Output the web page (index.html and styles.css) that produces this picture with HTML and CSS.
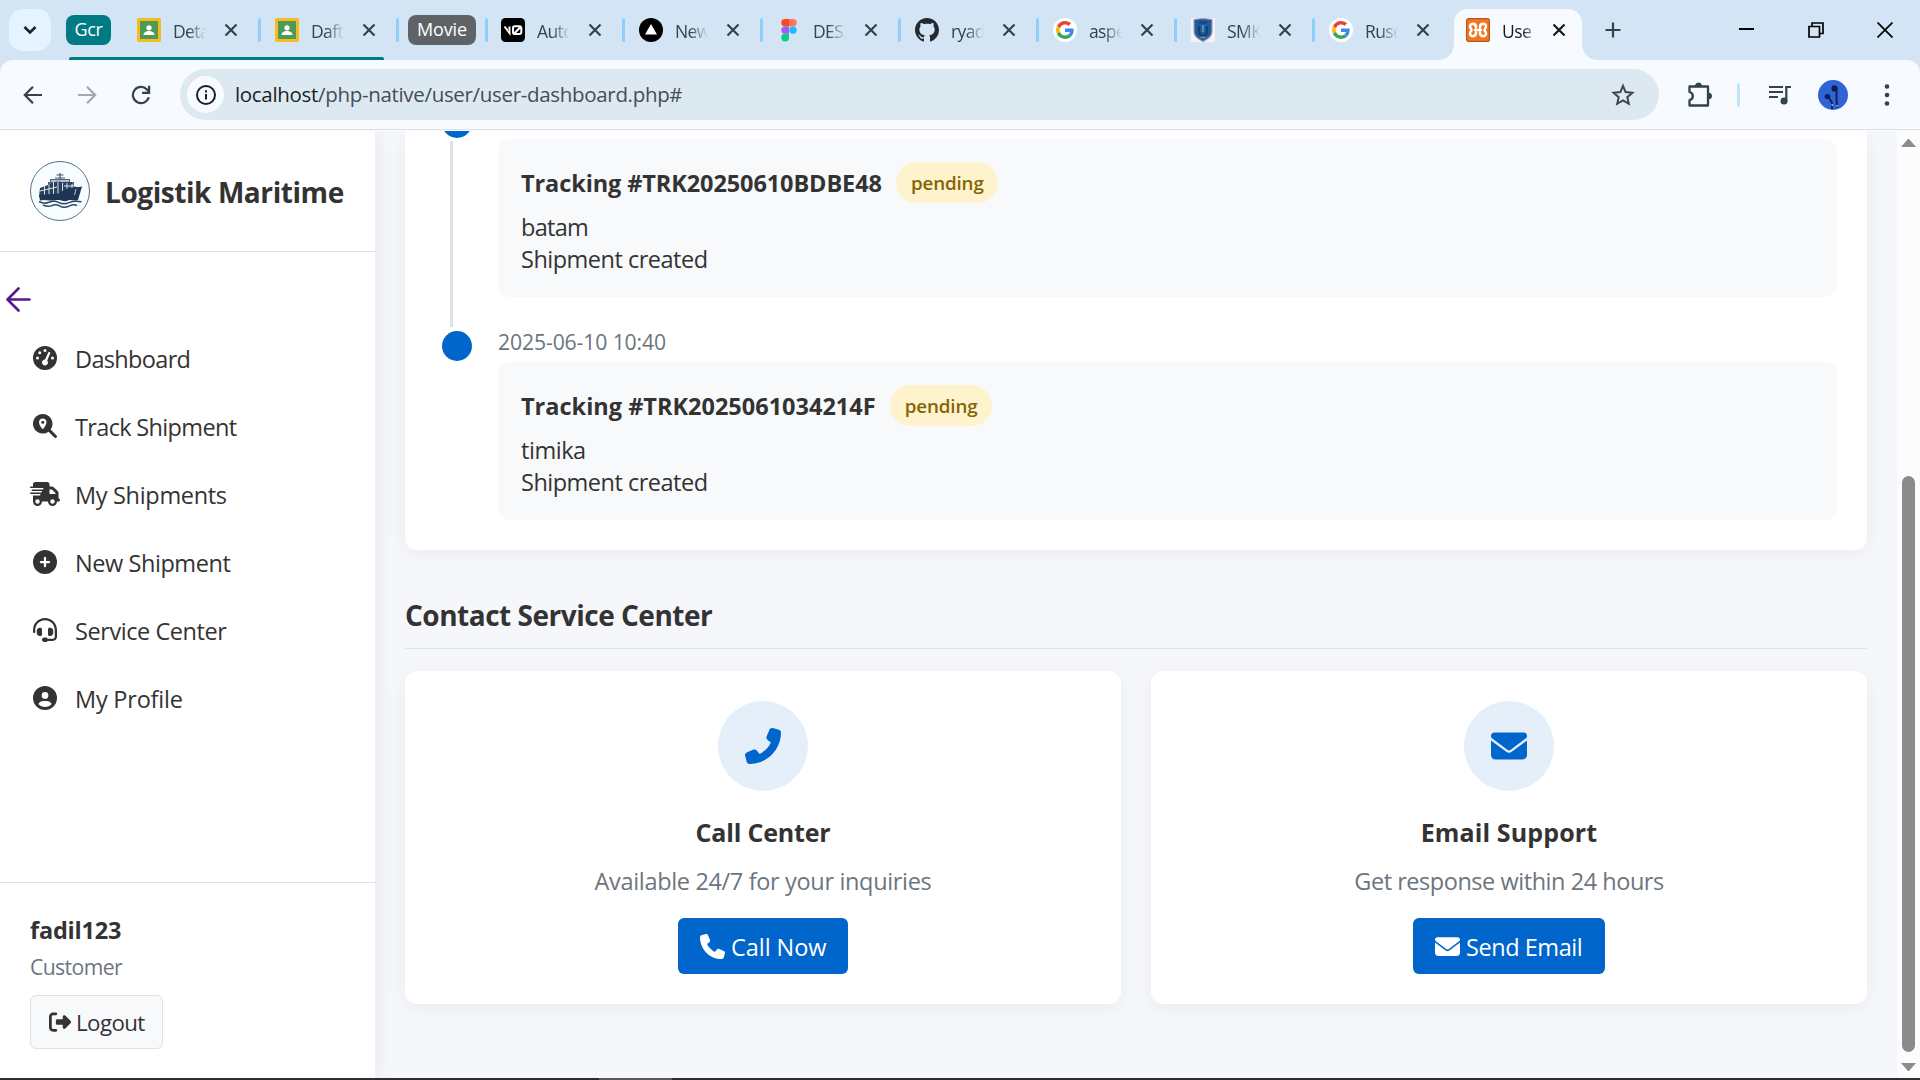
FILE: index.html
```html
<!DOCTYPE html>
<html lang="en">
<head>
<meta charset="utf-8">
<title>User Dashboard</title>
<link rel="stylesheet" href="styles.css">
</head>
<body>
<svg width="0" height="0" class="defs">
  <symbol id="close" viewBox="0 0 14 14"><path d="M1.500 1.500l11 11M12.500 1.500l-11 11" fill="none" stroke="currentColor" stroke-width="2.200"/></symbol>
  <symbol id="classroom" viewBox="0 0 24 24"><rect width="24" height="24" rx="2" fill="#f6bb1c"/><rect x="3" y="3" width="18" height="18" fill="#4d9a56"/><circle cx="12" cy="9.800" r="2.600" fill="#fff"/><path d="M6.500 17c0-2.800 3-4 5.500-4s5.500 1.200 5.500 4z" fill="#fff"/></symbol>
  <symbol id="google" viewBox="0 0 24 24"><circle cx="12" cy="12" r="12" fill="#fff"/><g transform="translate(3 3) scale(.375)"><path fill="#EA4335" d="M24 9.500c3.540 0 6.710 1.220 9.210 3.600l6.850-6.850C35.900 2.380 30.470 0 24 0 14.620 0 6.510 5.380 2.560 13.220l7.980 6.190C12.430 13.720 17.740 9.500 24 9.500z"/><path fill="#4285F4" d="M46.980 24.550c0-1.570-.15-3.090-.38-4.550H24v9.020h12.940c-.58 2.960-2.260 5.480-4.780 7.180l7.730 6c4.510-4.180 7.090-10.360 7.090-17.650z"/><path fill="#FBBC05" d="M10.530 28.590c-.48-1.450-.76-2.990-.76-4.590s.27-3.140.76-4.590l-7.980-6.190C.92 16.460 0 20.120 0 24c0 3.880.92 7.540 2.560 10.780l7.970-6.190z"/><path fill="#34A853" d="M24 48c6.480 0 11.930-2.130 15.890-5.810l-7.730-6c-2.150 1.450-4.920 2.300-8.160 2.300-6.260 0-11.570-4.220-13.470-9.910l-7.980 6.190C6.510 42.620 14.620 48 24 48z"/></g></symbol>
  <symbol id="phone" viewBox="0 0 512 512"><path fill="currentColor" d="M164.900 24.600c-7.700-18.600-28-28.500-47.400-23.200l-88 24C12.100 30.200 0 46 0 64C0 311.400 200.600 512 448 512c18 0 33.800-12.100 38.600-29.500l24-88c5.300-19.400-4.600-39.700-23.200-47.400l-96-40c-16.300-6.800-35.200-2.100-46.300 11.600L304.700 368C234.300 334.700 177.300 277.700 144 207.300L193.300 167c13.700-11.200 18.400-30 11.600-46.300l-40-96z"/></symbol>
  <symbol id="mail" viewBox="0 0 512 512"><path fill="currentColor" d="M48 64C21.500 64 0 85.500 0 112c0 15.100 7.100 29.300 19.200 38.400L236.800 313.600c11.400 8.500 27 8.500 38.400 0L492.800 150.400c12.100-9.100 19.200-23.300 19.200-38.400c0-26.500-21.500-48-48-48H48zM0 176V384c0 35.300 28.700 64 64 64H448c35.300 0 64-28.700 64-64V176L294.400 339.200c-22.800 17.100-54 17.100-76.800 0L0 176z"/></symbol>
</svg>

<header class="tabstrip">
  <div class="tab-search"><svg width="14" height="10" viewBox="0 0 14 10"><path d="M1.500 2L7 7.500 12.500 2" fill="none" stroke="#1b1f24" stroke-width="2.600"/></svg></div>
  <span class="group group-gcr">Gcr</span>
  <div class="tabs tabs-gcr">
    <div class="tab"><svg class="fav"><use href="#classroom"/></svg><span class="tab-title">Deta</span><svg class="x"><use href="#close"/></svg></div>
    <div class="tab"><svg class="fav"><use href="#classroom"/></svg><span class="tab-title">Daft</span><svg class="x"><use href="#close"/></svg></div>
  </div>
  <span class="group group-movie">Movie</span>
  <div class="tabs tabs-main">
    <div class="tab"><svg class="fav" viewBox="0 0 24 24"><rect width="24" height="24" rx="4.500" fill="#000"/><path d="M3.500 8.500l5 6.500V8.500M12.500 16.200L20 8.500M13.800 8.300h4.700a1.800 1.800 0 0 1 1.800 1.800v4.200a1.800 1.800 0 0 1-1.800 1.800h-4.700a1.800 1.800 0 0 1-1.800-1.800v-4.200a1.800 1.800 0 0 1 1.800-1.800z" fill="none" stroke="#fff" stroke-width="2"/></svg><span class="tab-title">Auto</span><svg class="x"><use href="#close"/></svg></div>
    <div class="tab"><svg class="fav" viewBox="0 0 24 24"><circle cx="12" cy="12" r="12"/><path d="M12 6l6 10.500H6z" fill="#fff"/></svg><span class="tab-title">New</span><svg class="x"><use href="#close"/></svg></div>
    <div class="tab"><svg class="fav" viewBox="0 0 24 24"><path fill="#f24e1e" d="M12 1H8a3.700 3.700 0 0 0 0 7.400h4z"/><path fill="#ff7262" d="M12 1h4a3.700 3.700 0 0 1 0 7.400h-4z"/><path fill="#a259ff" d="M12 8.400H8a3.700 3.700 0 0 0 0 7.400h4z"/><circle cx="16" cy="12.100" r="3.700" fill="#1abcfe"/><path fill="#0acf83" d="M8 15.800h4v3.700a3.850 3.850 0 1 1-4-3.700z"/></svg><span class="tab-title">DES.</span><svg class="x"><use href="#close"/></svg></div>
    <div class="tab"><svg class="fav" viewBox="0 0 16 16"><path fill="#24292f" d="M8 0C3.580 0 0 3.580 0 8c0 3.540 2.290 6.530 5.470 7.590.4.070.55-.17.55-.38 0-.19-.01-.82-.01-1.490-2.010.37-2.530-.49-2.690-.94-.09-.23-.48-.94-.82-1.130-.28-.15-.68-.52-.01-.53.63-.01 1.080.58 1.230.82.72 1.210 1.870.87 2.330.66.07-.52.28-.87.51-1.070-1.780-.2-3.640-.89-3.640-3.950 0-.87.31-1.590.82-2.150-.08-.2-.36-1.020.08-2.120 0 0 .67-.21 2.200.82.64-.18 1.320-.27 2-.27s1.360.09 2 .27c1.530-1.040 2.200-.82 2.200-.82.44 1.100.16 1.920.08 2.120.51.56.82 1.270.82 2.150 0 3.070-1.870 3.750-3.650 3.950.29.25.54.73.54 1.480 0 1.070-.01 1.930-.01 2.200 0 .21.15.46.55.38A8.010 8.010 0 0 0 16 8c0-4.420-3.580-8-8-8z"/></svg><span class="tab-title">ryad</span><svg class="x"><use href="#close"/></svg></div>
    <div class="tab"><svg class="fav"><use href="#google"/></svg><span class="tab-title">aspe</span><svg class="x"><use href="#close"/></svg></div>
    <div class="tab"><svg class="fav" viewBox="0 0 24 24"><rect width="24" height="24" fill="#f6f3f6"/><path d="M3 1.500L12 .5l9 1V14c0 4.500-4 7-9 9.500C7 21 3 18.500 3 14z" fill="#1f5c9c" stroke="#a999b8" stroke-width="1.200"/><path d="M8 4.500h8M8 8v5.500c0 3 2 4 4 4s4-1 4-4V8" fill="none" stroke="#163f78" stroke-width="2.200"/><path d="M12 7v7M9.500 19.500h5" stroke="#57a3a5" stroke-width="1.600"/></svg><span class="tab-title">SMK</span><svg class="x"><use href="#close"/></svg></div>
    <div class="tab last"><svg class="fav"><use href="#google"/></svg><span class="tab-title">Ruse</span><svg class="x"><use href="#close"/></svg></div>
    <div class="tab active"><svg class="fav" viewBox="0 0 24 24"><rect x=".6" y=".6" width="22.800" height="22.800" rx="2" fill="#f37623" stroke="#b9561a" stroke-width="1.200"/><path d="M10 9.500c0-5-6-4.500-6-1 0 2 1.500 2 1.500 3.500S4 13.500 4 15.500c0 3.500 6 4 6-1M14 9.500c0-5 6-4.500 6-1 0 2-1.500 2-1.500 3.500s1.500 1.500 1.500 3.500c0 3.500-6 4-6-1M9 12h6" fill="none" stroke="#fff" stroke-width="2.500" stroke-linecap="round" stroke-linejoin="round"/></svg><span class="tab-title">Use</span><svg class="x"><use href="#close"/></svg></div>
  </div>
  <svg class="plus" width="16" height="16" viewBox="0 0 16 16"><path d="M8 .5v15M.5 8h15" stroke="#32424f" stroke-width="2.200"/></svg>
  <div class="window-buttons">
    <svg width="16" height="16" viewBox="0 0 16 16"><path d="M0 7h15" stroke="#000" stroke-width="2"/></svg>
    <svg width="16" height="16" viewBox="0 0 16 16"><path d="M1 4.500h10.500V15H1zM4 4V1h11v10.500h-3" fill="none" stroke="#000" stroke-width="1.700"/></svg>
    <svg width="16" height="16" viewBox="0 0 16 16"><path d="M.5.5l15 15M15.500.5l-15 15" stroke="#000" stroke-width="1.700"/></svg>
  </div>
</header>

<div class="toolbar-back">
<div class="toolbar">
  <svg class="nav-btn" width="20" height="20" viewBox="0 0 20 20"><path d="M19 10H2.500M10 1.800L1.800 10l8.200 8.200" fill="none" stroke="#32424f" stroke-width="2.200"/></svg>
  <svg class="nav-btn" width="20" height="20" viewBox="0 0 20 20"><path d="M1 10h16.500M10 1.800l8.200 8.200-8.200 8.200" fill="none" stroke="#a3a9b0" stroke-width="2.200"/></svg>
  <svg class="nav-btn" width="20" height="20" viewBox="0 0 20 20"><path d="M17.800 12.300A8.100 8.100 0 1 1 16 4.500l2 2.300" fill="none" stroke="#32424f" stroke-width="2.200"/><path d="M18.100.8v7h-7" fill="none" stroke="#32424f" stroke-width="2.200"/></svg>
  <div class="omnibox">
    <span class="site-info"><svg width="22" height="22" viewBox="0 0 22 22"><circle cx="11" cy="11" r="9" fill="none" stroke="#1b1f24" stroke-width="2"/><path d="M11 10v5.500M11 6.300v2.200" stroke="#1b1f24" stroke-width="2"/></svg></span>
    <span class="url"><b>localhost</b>/php-native/user/user-dashboard.php#</span>
    <svg class="star" width="24" height="24" viewBox="0 0 24 24"><path d="M12 2.800l2.600 6.300 6.800.6-5.100 4.500 1.500 6.600-5.800-3.500-5.800 3.500 1.500-6.600-5.100-4.500 6.800-.6z" fill="none" stroke="#3e464e" stroke-width="2"/></svg>
  </div>
  <svg class="puzzle" width="26" height="26" viewBox="0 0 26 26"><path d="M2.500 4.500h18.500v19H2.500V18.200a4.200 4.200 0 0 0 0-8.200z" fill="none" stroke="#32424f" stroke-width="2.300" stroke-linejoin="round"/><path d="M8.500 4a3 3 0 0 1 6 0zM21.500 11a3 3 0 0 1 0 6z" fill="#32424f" stroke="#32424f"/></svg>
  <span class="tool-sep"></span>
  <svg class="playlist" width="24" height="22" viewBox="0 0 24 22"><path d="M1 3h14M1 8h14M1 13h9" stroke="#32424f" stroke-width="2.200"/><path d="M18.300 17V3H23" fill="none" stroke="#32424f" stroke-width="2.200"/><circle cx="16" cy="17" r="3.500" fill="#32424f"/></svg>
  <svg class="avatar" width="30" height="30" viewBox="0 0 30 30"><circle cx="15" cy="15" r="15" fill="#2f64d4"/><path d="M10.500 17l3.500 6v6M18.500 8v10l.5 10" fill="none" stroke="#142263" stroke-width="2"/><ellipse cx="9.500" cy="16.500" rx="2.800" ry="2.600" fill="#101c58"/><ellipse cx="16.500" cy="8.500" rx="3" ry="3.300" fill="#101c58"/><path d="M14.200 24v2M19 25v2" stroke="#b9c7ef" stroke-width="1.200"/></svg>
  <svg class="dots" width="6" height="24" viewBox="0 0 6 24"><circle cx="3" cy="3.500" r="2.300"/><circle cx="3" cy="12" r="2.300"/><circle cx="3" cy="20.500" r="2.300"/></svg>
</div>
</div>

<div class="page">
  <aside class="sidebar">
    <div class="brand">
      <svg width="60" height="60" viewBox="0 0 60 60"><circle cx="30" cy="30" r="29.500" fill="#f7fcff" stroke="#53738c"/>
        <path d="M30 12v6M26.500 14h7M25 17h10" stroke="#3d566f" stroke-width="1.200"/>
        <path d="M20 18h20v3h4v7H18v-7h2z" fill="#4d657d"/><path d="M21 20h18" stroke="#f7fcff" stroke-width="1.200"/>
        <path d="M10 27l8-3 10-4 6 2v-1h8v4l5 1v4l-18 4-20 2z" fill="#293f5c"/>
        <path d="M14.500 25v9M19 23.500v10M23.500 21v12M28 20v13M32.500 22v8M37 22v7M42 23v5M10 30l17-4M34 25h10" stroke="#edf4f8" stroke-width=".9"/>
        <path d="M9 34l20-1.500 6-4.500 17-2.500-4 13.500c-4 1.500-7-1-10 .5s-6 0-9-.5-5 1-9 .5-7-1-10 0z" fill="#1e3553"/>
        <path d="M46 28l-1.500 6" stroke="#e6eef4" stroke-width=".8"/>
        <path d="M9 40.500q5 2.800 10 .8t10 .3 10 0 12.500-.8M13 44q5 2.300 9 .6t8 .5 9 0 8-.5" fill="none" stroke="#2a4864" stroke-width="1.500"/></svg>
      <h1>Logistik Maritime</h1>
    </div>
    <div class="back"><svg width="25" height="25" viewBox="0 0 25 25"><path d="M23.500 12.500H2M12.500 1.500l-11 11 11 11" fill="none" stroke="#551a8b" stroke-width="2.600" stroke-linecap="round" stroke-linejoin="round"/></svg></div>
    <nav class="menu">
      <div class="item"><svg viewBox="0 0 512 512"><path d="M0 256a256 256 0 1 1 512 0A256 256 0 1 1 0 256zM288 96a32 32 0 1 0 -64 0 32 32 0 1 0 64 0zM256 416c35.300 0 64-28.700 64-64c0-17.400-6.900-33.100-18.100-44.600L366 161.700c5.300-12.100-.2-26.300-12.300-31.600s-26.300 .2-31.600 12.300L257.900 288c-.6 0-1.300 0-1.900 0c-35.300 0-64 28.700-64 64s28.700 64 64 64zM176 144a32 32 0 1 0 -64 0 32 32 0 1 0 64 0zM96 288a32 32 0 1 0 0-64 32 32 0 1 0 0 64zm352-32a32 32 0 1 0 -64 0 32 32 0 1 0 64 0z"/></svg><span>Dashboard</span></div>
      <div class="item"><svg viewBox="0 0 512 512"><path d="M416 208c0 45.900-14.900 88.300-40 122.700L502.600 457.400c12.500 12.500 12.500 32.800 0 45.300s-32.800 12.500-45.300 0L330.700 376c-34.400 25.200-76.800 40-122.700 40C93.100 416 0 322.900 0 208S93.100 0 208 0S416 93.100 416 208z"/><path fill="#fff" d="M288 176c0 48.800-46.600 111.600-68.600 138.600c-6 7.300-16.800 7.300-22.700 0c-22-27-68.600-89.900-68.600-138.600c0-44.200 35.800-80 80-80s80 35.800 80 80z"/><circle cx="208" cy="176" r="32"/></svg><span>Track Shipment</span></div>
      <div class="item"><svg class="wide" viewBox="0 0 640 512"><path d="M112 0C85.500 0 64 21.500 64 48V96H16c-8.800 0-16 7.200-16 16s7.200 16 16 16H64 272c8.800 0 16 7.200 16 16s-7.200 16-16 16H64 48c-8.800 0-16 7.200-16 16s7.200 16 16 16H64 240c8.800 0 16 7.200 16 16s-7.200 16-16 16H64 16c-8.800 0-16 7.200-16 16s7.200 16 16 16H64 208c8.800 0 16 7.200 16 16s-7.200 16-16 16H64V416c0 53 43 96 96 96s96-43 96-96H384c0 53 43 96 96 96s96-43 96-96h32c17.700 0 32-14.300 32-32s-14.300-32-32-32V288 256 237.300c0-17-6.700-33.300-18.700-45.300L512 114.700c-12-12-28.300-18.700-45.300-18.700H416V48c0-26.500-21.500-48-48-48H112zM544 237.300V256H416V160h50.700L544 237.300zM160 368a48 48 0 1 1 0 96 48 48 0 1 1 0-96zm272 48a48 48 0 1 1 96 0 48 48 0 1 1 -96 0z"/></svg><span>My Shipments</span></div>
      <div class="item"><svg viewBox="0 0 512 512"><circle cx="256" cy="256" r="256"/><path d="M256 168v176M168 256h176" stroke="#fff" stroke-width="48" stroke-linecap="round"/></svg><span>New Shipment</span></div>
      <div class="item"><svg viewBox="0 0 512 512"><path d="M256 48C141.100 48 48 141.100 48 256v40c0 13.300-10.700 24-24 24s-24-10.700-24-24V256C0 114.600 114.600 0 256 0S512 114.600 512 256V400.100c0 48.600-39.400 88-88.100 88L313.600 488c-8.300 14.300-23.800 24-41.600 24H240c-26.500 0-48-21.500-48-48s21.500-48 48-48h32c17.800 0 33.300 9.700 41.600 24l110.400 .1c22.100 0 40-17.900 40-40V256c0-114.900-93.100-208-208-208zM144 208h16c17.700 0 32 14.300 32 32V352c0 17.700-14.300 32-32 32H144c-35.300 0-64-28.700-64-64V272c0-35.300 28.700-64 64-64zm224 0c35.300 0 64 28.700 64 64v48c0 35.300-28.700 64-64 64H352c-17.700 0-32-14.300-32-32V240c0-17.700 14.300-32 32-32h16z"/></svg><span>Service Center</span></div>
      <div class="item"><svg viewBox="0 0 512 512"><path d="M399 384.200C376.900 345.800 335.400 320 288 320H224c-47.400 0-88.900 25.800-111 64.200c35.200 39.200 86.200 63.800 143 63.800s107.800-24.700 143-63.800zM0 256a256 256 0 1 1 512 0A256 256 0 1 1 0 256zm256 16a72 72 0 1 0 0-144 72 72 0 1 0 0 144z"/></svg><span>My Profile</span></div>
    </nav>
    <div class="user">
      <div class="user-name">fadil123</div>
      <div class="user-role">Customer</div>
      <div class="logout"><svg width="22" height="22" viewBox="0 0 512 512"><path d="M377.900 105.900L500.700 228.700c7.200 7.200 11.300 17.100 11.300 27.300s-4.100 20.100-11.300 27.300L377.900 406.100c-6.400 6.400-15 9.900-24 9.900c-18.700 0-33.900-15.200-33.900-33.900l0-62.100-128 0c-17.700 0-32-14.300-32-32l0-64c0-17.700 14.300-32 32-32l128 0 0-62.100c0-18.700 15.200-33.900 33.900-33.900c9 0 17.600 3.600 24 9.900zM160 96L96 96c-17.700 0-32 14.300-32 32l0 256c0 17.700 14.300 32 32 32l64 0c17.700 0 32 14.300 32 32s-14.300 32-32 32l-64 0c-53 0-96-43-96-96L0 128C0 75 43 32 96 32l64 0c17.700 0 32 14.300 32 32s-14.300 32-32 32z"/></svg><span>Logout</span></div>
    </div>
  </aside>

  <main class="main">
    <section class="timeline">
      <div class="event scrolled">
        <div class="marker"><i class="dot"></i><i class="line"></i></div>
        <div class="event-body">
          <div class="event-card">
            <div class="event-head"><strong>Tracking #TRK20250610BDBE48</strong><span class="badge">pending</span></div>
            <p class="place-batam">batam</p><p class="note">Shipment created</p>
          </div>
        </div>
      </div>
      <div class="event">
        <div class="marker"><i class="dot"></i></div>
        <div class="event-body">
          <div class="date">2025-06-10 10:40</div>
          <div class="event-card">
            <div class="event-head"><strong class="wider">Tracking #TRK2025061034214F</strong><span class="badge">pending</span></div>
            <p class="place-timika">timika</p><p class="note">Shipment created</p>
          </div>
        </div>
      </div>
    </section>
    <h2>Contact Service Center</h2>
    <section class="contacts">
      <div class="contact">
        <div class="circle"><svg class="flip" width="36" height="36"><use href="#phone"/></svg></div>
        <h3 class="t-call">Call Center</h3>
        <p class="d-call">Available 24/7 for your inquiries</p>
        <div class="btn b-call"><svg width="25" height="25"><use href="#phone"/></svg><span>Call Now</span></div>
      </div>
      <div class="contact">
        <div class="circle"><svg width="36" height="36"><use href="#mail"/></svg></div>
        <h3 class="t-mail">Email Support</h3>
        <p class="d-mail">Get response within 24 hours</p>
        <div class="btn b-mail"><svg width="25" height="25"><use href="#mail"/></svg><span>Send Email</span></div>
      </div>
    </section>
  </main>
  <div class="scrollbar"><i class="up"></i><i class="thumb"></i><i class="down"></i></div>
</div>
<footer class="taskbar"><i></i></footer>
</body>
</html>
```
FILE: styles.css
```css
* { box-sizing: border-box; margin: 0; padding: 0; }
body {
  width: 1920px; height: 1080px; overflow: hidden;
  display: flex; flex-direction: column;
  font-family: "Open Sans", "Noto Sans", sans-serif; color: #333; background: #f5f7fb;
}
svg { display: block; flex: none; }
.defs { position: absolute; }

/* tab strip */
.tabstrip { height: 60px; flex: none; display: flex; background: #d3e5f4; font-size: 17.5px; color: #32424f; }
.tab-search { width: 42px; height: 42px; margin: 9px 0 0 9px; border-radius: 14px; background: #e4f3ff; display: flex; align-items: center; justify-content: center; }
.group { height: 30px; margin-top: 15px; border-radius: 8px; color: #fff; line-height: 29px; text-align: center; font-size: 18px; flex: none; }
.group-gcr { width: 45px; margin-left: 15px; background: #007b83; letter-spacing: -.36px; }
.group-movie { width: 68px; margin-left: 8px; background: #5f6368; letter-spacing: -.13px; }
.tabs { display: flex; height: 60px; flex: none; }
.tabs-gcr { margin-left: 13px; position: relative; }
.tabs-gcr::after { content: ""; position: absolute; left: -55px; right: 16px; top: 57px; height: 3px; border-radius: 2px 2px 0 0; background: #007b83; }
.tabs-main { margin-left: 12px; }
.tabs-main::before { content: ""; align-self: flex-start; width: 3px; height: 24px; margin: 18px 0 0 -3px; border-radius: 2px; background: #8ed0fb; }
.tab { width: 138px; height: 60px; display: flex; align-items: flex-start; padding: 18px 1px 0 13px; }
.tab:not(.last):not(.active)::after { content: ""; width: 3px; height: 24px; margin-left: auto; border-radius: 2px; background: #8ed0fb; }
.fav { width: 24px; height: 24px; }
.tab-title { width: 33px; height: 30px; line-height: 27px; margin: 0 18px 0 12px; overflow: hidden; white-space: nowrap; letter-spacing: -.6px;
  -webkit-mask-image: linear-gradient(90deg, #000 45%, transparent 100%); mask-image: linear-gradient(90deg, #000 45%, transparent 100%); }
.x { width: 14px; height: 14px; margin-top: 5px; }
.tab.active { position: relative; width: 128px; height: 51px; margin-top: 9px; padding-top: 9px; padding-left: 12px; border-radius: 14px 14px 0 0; background: #f7faff; color: #15191d; }
.active .tab-title { margin-right: 17px; -webkit-mask-image: linear-gradient(90deg, #000 60%, rgba(0, 0, 0, .3) 100%); mask-image: linear-gradient(90deg, #000 60%, rgba(0, 0, 0, .3) 100%); }
.tab.active::before, .tab.active::after { content: ""; position: absolute; bottom: 0; width: 15px; height: 15px; }
.tab.active::before { left: -15px; background: radial-gradient(circle at 0 0, transparent 14.500px, #f7faff 15px); }
.tab.active::after { right: -15px; background: radial-gradient(circle at 100% 0, transparent 14.500px, #f7faff 15px); }
.plus { margin: 22px 0 0 23px; }
.window-buttons { margin: 22px 27px 0 auto; display: flex; gap: 53px; }

/* toolbar */
.toolbar-back { height: 71px; flex: none; background: #d3e5f4; }
.toolbar { height: 71px; background: #f7faff; border-radius: 13px 13px 0 0; display: flex; align-items: center; padding: 0 30px 2px 23px; box-shadow: inset 0 -1px #f7faff, inset 0 -2px #d9e2eb; }
.nav-btn { margin-right: 34px; }
.nav-btn:nth-child(3) { margin-right: 29px; }
.omnibox { width: 1479px; height: 51px; border-radius: 26px; background: #dde9f1; display: flex; align-items: center; padding: 0 24px 0 7px; }
.site-info { width: 37px; height: 37px; border-radius: 50%; background: #f7faff; display: flex; align-items: center; justify-content: center; }
.url { margin: -2px 0 0 11px; font-size: 20.500px; letter-spacing: -.32px; line-height: 30px; color: #454d55; }
.url b { font-weight: 400; color: #1b1f24; }
.star { margin-left: auto; }
.puzzle { margin-left: 28px; }
.tool-sep { width: 3px; height: 24px; margin-left: 24px; border-radius: 2px; background: #c1e5fd; }
.playlist { margin-left: 28px; }
.avatar { margin-left: 26px; }
.dots { margin-left: 36px; fill: #32424f; }

/* page */
.page { height: 947px; flex: none; display: flex; overflow: hidden; }
.sidebar { width: 375px; flex: none; background: #fff; display: flex; flex-direction: column; box-shadow: 0 0 20px rgba(0, 0, 0, .08); z-index: 1; }
.brand { height: 121px; flex: none; padding: 0 30px; display: flex; align-items: center; gap: 15px; border-bottom: 1px solid #dee2e6; }
.brand h1 { font-size: 28px; line-height: 42px; letter-spacing: -.43px; padding-top: 1px; white-space: nowrap; }
.back { height: 72px; padding: 35px 0 0 6px; }
.menu { flex: 1; }
.item { height: 68px; display: flex; align-items: center; padding-left: 30px; gap: 15px; font-size: 23.500px; letter-spacing: -.43px; }
.item svg { width: 24px; height: 24px; margin: 0 3px; fill: #333; }
.item svg.wide { width: 30px; margin: 0; }
.item span { padding-top: 2px; }
.item:nth-child(1) span, .item:nth-child(2) span { letter-spacing: -.66px; }
.item:nth-child(3) span { letter-spacing: -.32px; }
.item:nth-child(6) span { letter-spacing: -.22px; }
.user { height: 196px; border-top: 1px solid #dee2e6; padding: 29px 30px 0; }
.user-name { font-size: 23.500px; font-weight: 700; line-height: 36px; letter-spacing: -.2px; }
.user-role { margin-top: 3px; font-size: 21.200px; line-height: 32px; letter-spacing: -.62px; color: #6c757d; }
.logout { width: 133px; height: 54px; margin-top: 12px; padding-left: 18px; display: flex; align-items: center; gap: 5px; border: 1px solid #dee2e6; border-radius: 6px; background: #f8f9fb; font-size: 22.300px; letter-spacing: -.58px; }
.logout svg { fill: #333; }

.main { flex: 1; padding: 0 30px; overflow: hidden; }
.timeline { height: 419px; padding: 0 30px 0 37px; background: #fff; border-radius: 0 0 12px 12px; box-shadow: 0 4px 20px rgba(0, 0, 0, .05); }
.event { display: flex; }
.marker { width: 30px; margin-right: 26px; padding-top: 5px; display: flex; flex-direction: column; }
.dot { width: 30px; height: 30px; flex: none; border-radius: 50%; background: #06c; }
.line { width: 3px; flex: 1; margin: 3px 0 -1px 8px; background: #dee2e6; }
.event-body { flex: 1; }
.scrolled { height: 195px; }
.scrolled .marker { padding-top: 0; margin-top: -23px; }
.scrolled .event-body { padding-top: 8px; }
.date { height: 32px; margin-bottom: 4px; font-size: 21.200px; line-height: 32px; letter-spacing: -.13px; color: #6c757d; }
.event-card { height: 158px; padding: 23px; border-radius: 12px; background: #f8f9fb; font-size: 23.500px; line-height: 32px; }
.event-head { display: flex; align-items: center; height: 41px; margin-bottom: 8px; }
.event-head strong { letter-spacing: -.1px; padding-top: 1px; }
.event-head .wider { letter-spacing: 0; }
.badge { width: 102px; height: 41px; margin-left: 14.500px; border-radius: 21px; background: #fff3cd; color: #856404; font-size: 18.800px; font-weight: 600; line-height: 42px; text-align: center; letter-spacing: -.15px; }
.place-batam { letter-spacing: -.7px; }
.place-timika { letter-spacing: -.45px; }
.note { letter-spacing: -.5px; }
h2 { height: 55px; margin: 44px 0 22px; border-bottom: 1px solid #dee2e6; font-size: 28px; font-weight: 700; line-height: 43px; letter-spacing: -.49px; }
.contacts { display: grid; grid-template-columns: 1fr 1fr; gap: 30px; }
.contact { height: 333px; padding-top: 30px; display: flex; flex-direction: column; align-items: center; background: #fff; border-radius: 12px; box-shadow: 0 4px 20px rgba(0, 0, 0, .05); }
.circle { width: 90px; height: 90px; border-radius: 50%; background: #e5effa; color: #06c; display: flex; align-items: center; justify-content: center; padding-bottom: 1px; }
.flip { transform: scaleX(-1); }
h3 { margin-top: 23px; font-size: 25px; line-height: 36px; }
.contact p { margin-top: 13px; font-size: 23.500px; line-height: 36px; color: #6c757d; }
.t-call { letter-spacing: -.17px; }
.t-mail { letter-spacing: .13px; }
.d-call { letter-spacing: -.34px; }
.d-mail { letter-spacing: -.46px; }
.btn { height: 56px; margin-top: 19px; padding: 0 22px; display: flex; align-items: center; gap: 6px; border-radius: 6px; background: #06c; color: #fff; font-size: 23.500px; white-space: nowrap; }
.btn span { padding-top: 2px; }
.b-call { width: 170px; letter-spacing: -.05px; }
.b-mail { width: 192px; letter-spacing: -.45px; }

/* scroll bar */
.scrollbar { width: 23px; flex: none; background: #fcfcfc; display: flex; flex-direction: column; padding-left: 4px; }
.up { margin-top: 8px; border: 7.500px solid transparent; border-top: 0; border-bottom: 8px solid #8b8b8b; width: 15px; }
.thumb { width: 13px; height: 576px; margin: 329px 0 0 1px; border-radius: 7px; background: #8b8b8b; }
.down { margin-top: 11px; border: 7.500px solid transparent; border-bottom: 0; border-top: 8px solid #8b8b8b; width: 15px; }
.taskbar { height: 2px; background: #2e2e31; flex: none; }
.taskbar i { display: block; width: 73px; height: 2px; margin-left: 599px; background: #5a5a5e; }
```
